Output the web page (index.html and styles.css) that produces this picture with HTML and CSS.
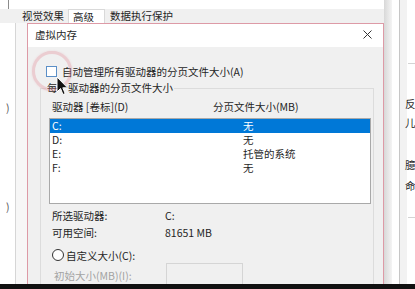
FILE: index.html
```html
<!DOCTYPE html>
<html lang="zh-CN">
<head>
    <meta charset="UTF-8">
    <meta name="viewport" content="width=device-width, initial-scale=1.0">
    <title>虚拟内存</title>
    <link rel="stylesheet" href="styles.css">
</head>
<body>
    <div class="screen">
        <!-- back window: performance options tabs -->
        <div class="back-tabs">
            <div class="caption"><span class="edge"></span></div>
            <div class="tabs">
                <span class="tab">视觉效果</span>
                <span class="tab active">高级</span>
                <span class="tab">数据执行保护</span>
            </div>
        </div>
        <div class="back-left">
            <span class="clip">)</span>
            <span class="clip low">)</span>
        </div>

        <!-- virtual memory dialog -->
        <div class="dialog">
            <div class="titlebar">
                <span>虚拟内存</span>
                <svg class="close" width="9" height="9" viewBox="0 0 9 9">
                    <path d="M0.5 0.5 L8.5 8.5 M8.5 0.5 L0.5 8.5" stroke="#333" stroke-width="1" fill="none"/>
                </svg>
            </div>
            <div class="body">
                <label class="auto"><span class="check"></span>自动管理所有驱动器的分页文件大小(A)</label>
                <fieldset class="group">
                    <legend>每个驱动器的分页文件大小</legend>
                    <div class="cols">
                        <span>驱动器 [卷标](D)</span>
                        <span>分页文件大小(MB)</span>
                    </div>
                    <div class="list">
                        <div class="row sel"><span>C:</span><span>无</span></div>
                        <div class="row"><span>D:</span><span>无</span></div>
                        <div class="row"><span>E:</span><span>托管的系统</span></div>
                        <div class="row"><span>F:</span><span>无</span></div>
                    </div>
                    <div class="info">
                        <span>所选驱动器:</span><span>C:</span>
                        <span>可用空间:</span><span>81651 MB</span>
                    </div>
                    <label class="radio-row"><span class="radio"></span>自定义大小(C):</label>
                    <div class="size-row">
                        <span class="muted">初始大小(MB)(I):</span>
                        <span class="input"></span>
                    </div>
                </fieldset>
            </div>
        </div>

        <div class="back-right">
            <span class="shade"></span>
            <span class="gap"></span>
            <span class="rule"></span>
            <div class="panel">
                <div class="hr"></div>
                <div class="chars">
                    <span class="c1">反</span>
                    <span class="c2">儿</span>
                    <span class="c3">臆</span>
                    <span class="c4">命</span>
                </div>
                <div class="hr hr2"></div>
            </div>
        </div>

        <!-- click highlight + pointer -->
        <span class="ring"></span>
        <svg class="cursor" width="13" height="20" viewBox="0 0 13 20">
            <path d="M1 1 L1 16 L4.5 12.5 L7 18.5 L9.2 17.6 L6.8 11.8 L11.5 11.8 Z" fill="#111" stroke="#fff" stroke-width="1"/>
        </svg>
    </div>
    <div class="taskbar"></div>
</body>
</html>
```

FILE: styles.css
```css
body {
    margin: 0;
    font-family: "Noto Sans CJK SC", "Noto Sans", sans-serif;
    font-size: 10.5px;
    color: #1f1f1f;
    background: #fff;
    overflow: hidden;
}
.screen {
    position: relative;
    display: grid;
    grid-template-columns: 27px 357px 1fr;
    grid-template-rows: 23px 1fr;
    height: 284px;
    overflow: hidden;
    background: #fff;
}
.back-tabs {
    grid-column: 1 / 3;
    grid-row: 1;
    display: flex;
    flex-direction: column;
}
.caption {
    height: 9px;
    background: #fff;
}
.edge {
    display: block;
    margin-left: 8px;
    width: 1px;
    height: 12px;
    background: #8c8c8c;
}
.tabs {
    height: 14px;
    display: flex;
    padding-left: 17px;
    background: #f0f0f0;
    line-height: 14px;
}
.tab {
    padding: 0 5px;
    white-space: nowrap;
}
.tab.active {
    margin-left: -1px;
    width: 37px;
    box-sizing: border-box;
    padding-left: 4px;
    background: #fff;
    border: 1px solid #d9d9d9;
    border-bottom: none;
    line-height: 13px;
}
.back-left {
    grid-column: 1;
    grid-row: 2;
    display: flex;
    flex-direction: column;
    background: linear-gradient(to right, #fff 15px, #d6d6d6 15px, #d6d6d6 16px, #f7f7f7 16px);
}
.clip {
    margin: 78px 0 0 6px;
    color: #555;
    line-height: 14px;
}
.clip.low {
    margin-top: 85px;
}
.dialog {
    grid-column: 2;
    grid-row: 2;
    border: 1px solid #dd9aa6;
    border-bottom: none;
    background: #f0f0f0;
}
.titlebar {
    height: 23px;
    display: flex;
    align-items: center;
    justify-content: space-between;
    padding: 0 11px 2px 7px;
    box-sizing: border-box;
    background: #fff;
}
.body {
    padding: 18px 9px 0 12px;
}
.auto {
    display: flex;
    align-items: center;
    gap: 5px;
    margin-left: 6px;
    line-height: 13px;
}
.check {
    width: 11px;
    height: 11px;
    box-sizing: border-box;
    border: 1px solid #5b8fc7;
    background: #fff;
}
.group {
    margin: 3px 0 0;
    padding: 0 2px 0 8px;
    border: 1px solid #dcdcdc;
    min-width: 0;
}
.group legend {
    margin-left: -3px;
    padding: 0 1px;
    line-height: 14px;
}
.cols {
    display: grid;
    grid-template-columns: 161px 1fr;
    padding: 5px 0 0 3px;
    line-height: 14px;
}
.list {
    margin-top: 4px;
    height: 86px;
    box-sizing: border-box;
    border: 1px solid #a9a9a9;
    background: #fff;
}
.row {
    display: grid;
    grid-template-columns: 191px 1fr;
    padding-left: 2px;
    height: 14px;
    line-height: 14px;
}
.row.sel {
    background: #0078d7;
    color: #fff;
}
.info {
    display: grid;
    grid-template-columns: 113px 1fr;
    margin-top: 3px;
    padding-left: 3px;
    line-height: 17px;
}
.radio-row {
    display: flex;
    align-items: center;
    gap: 2px;
    margin: 7px 0 0 3px;
    height: 14px;
}
.radio {
    width: 12px;
    height: 12px;
    box-sizing: border-box;
    border: 1px solid #333;
    border-radius: 50%;
    background: #fff;
}
.size-row {
    display: flex;
    align-items: flex-start;
    margin-top: 1px;
    padding-left: 5px;
}
.muted {
    width: 112px;
    margin-top: 6px;
    line-height: 14px;
    color: #a3a3a3;
}
.input {
    width: 77px;
    height: 30px;
    box-sizing: border-box;
    border: 1px solid #d5d5d5;
    background: #f0f0f0;
}
.back-right {
    grid-column: 3;
    grid-row: 1 / 3;
    display: flex;
}
.shade {
    width: 8px;
    background: linear-gradient(to right, #d8d8d8, #f4f4f4);
}
.gap {
    width: 7px;
    background: #fff;
}
.rule {
    width: 1px;
    background: #c6c6c6;
}
.panel {
    flex: 1;
    padding-top: 63px;
    background: linear-gradient(to right, #f2f2f2 7px, #fff 7px);
    overflow: hidden;
}
.hr {
    margin-left: 8px;
    height: 1px;
    background: #d4d4d4;
}
.chars {
    display: flex;
    flex-direction: column;
    padding-left: 5px;
    line-height: 14px;
    white-space: nowrap;
}
.c1 { margin-top: 33px; }
.c2 { margin-top: 5px; }
.c3 { margin-top: 28px; }
.c4 { margin-top: 7px; }
.hr2 {
    margin-top: 24px;
}
.ring {
    position: absolute;
    left: 32px;
    top: 51px;
    width: 40px;
    height: 40px;
    box-sizing: border-box;
    border: 3px solid rgba(226, 140, 152, 0.35);
    border-radius: 50%;
    box-shadow: 0 0 2px rgba(226, 140, 152, 0.3);
}
.cursor {
    position: absolute;
    left: 56px;
    top: 76px;
}
.taskbar {
    height: 5px;
    background: #111;
}
```
